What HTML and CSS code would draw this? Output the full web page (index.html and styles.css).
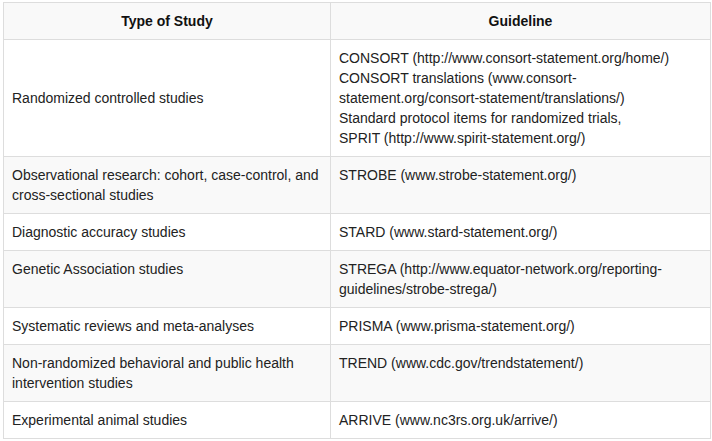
FILE: index.html
```html
<!DOCTYPE html>
<html>
<head>
<meta charset="utf-8">
<link rel="stylesheet" href="styles.css">
</head>
<body>
<table class="guide">
  <colgroup><col class="c1"><col class="c2"></colgroup>
  <thead>
    <tr><th>Type of Study</th><th>Guideline</th></tr>
  </thead>
  <tbody>
    <tr><td class="mid">Randomized controlled studies</td><td>CONSORT (http://www.consort-statement.org/home/)<br>CONSORT translations (www.consort-<br>statement.org/consort-statement/translations/)<br>Standard protocol items for randomized trials,<br>SPRIT (http://www.spirit-statement.org/)</td></tr>
    <tr><td>Observational research: cohort, case-control, and cross-sectional studies</td><td>STROBE (www.strobe-statement.org/)</td></tr>
    <tr><td>Diagnostic accuracy studies</td><td>STARD (www.stard-statement.org/)</td></tr>
    <tr><td>Genetic Association studies</td><td>STREGA (http://www.equator-network.org/reporting-<br>guidelines/strobe-strega/)</td></tr>
    <tr><td>Systematic reviews and meta-analyses</td><td>PRISMA (www.prisma-statement.org/)</td></tr>
    <tr><td>Non-randomized behavioral and public health intervention studies</td><td>TREND (www.cdc.gov/trendstatement/)</td></tr>
    <tr><td>Experimental animal studies</td><td>ARRIVE (www.nc3rs.org.uk/arrive/)</td></tr>
  </tbody>
</table>
</body>
</html>
```
FILE: styles.css
```css
html, body {
  margin: 0;
  background: #fff;
}
body {
  padding: 2px 2px 0 3px;
  font-family: "Liberation Sans", Arial, sans-serif;
  font-size: 14px;
  line-height: 20px;
  color: #222;
}
.guide {
  border-collapse: collapse;
  width: 708px;
  table-layout: fixed;
}
.c1 { width: 327px; }
.guide th, .guide td {
  border: 1px solid #ddd;
  padding: 8px;
  text-align: left;
  vertical-align: top;
}
.guide th {
  text-align: center;
  font-weight: bold;
  background: #f9f9f9;
  color: #111;
}
.guide td.mid {
  vertical-align: middle;
}
.guide tbody tr:nth-child(even) td {
  background: #f9f9f9;
}
```
